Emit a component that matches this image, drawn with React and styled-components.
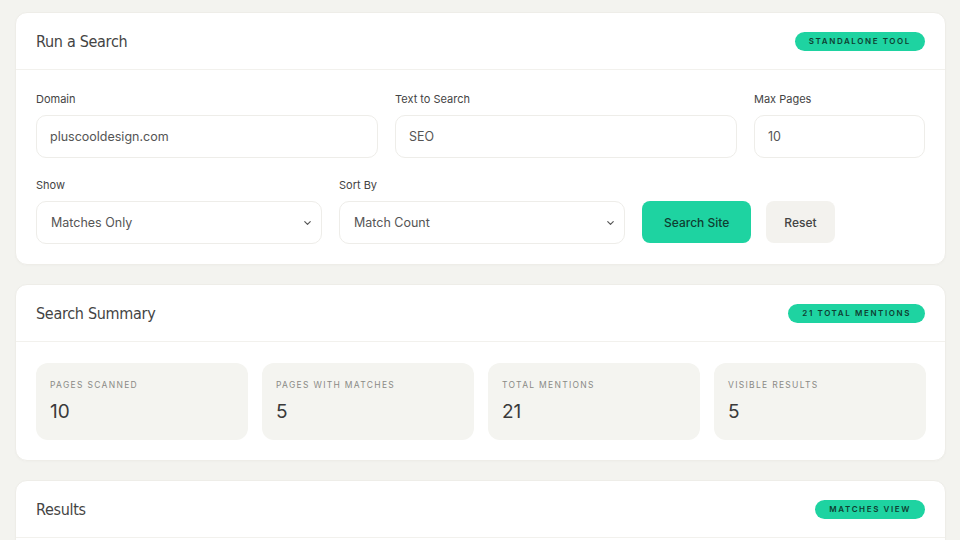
import styled, { createGlobalStyle } from 'styled-components';
import { ChevronDown } from 'lucide-react';

const GlobalStyle = createGlobalStyle`
  html, body {
    margin: 0;
    padding: 0;
    background: #f3f3ef;
    font-family: Inter, "Noto Sans", sans-serif;
    color: #3a3a3a;
  }
`;

// Layout
const Page = styled.div`
  display: flex;
  flex-direction: column;
  gap: 19px;
  padding: 12px 14px 12px 15px;
`;

const Card = styled.section`
  background: #ffffff;
  border: 1px solid #eeede8;
  border-radius: 12px;
  box-shadow: 0 1px 3px rgba(0, 0, 0, 0.02);
`;

const CardHeader = styled.header`
  height: 56px;
  padding: 0 20px;
  display: flex;
  align-items: center;
  justify-content: space-between;
  border-bottom: 1px solid #f2f1ed;
`;

const Title = styled.h2`
  margin: 0;
  font-family: "DejaVu Sans", sans-serif;
  font-stretch: condensed;
  font-weight: 400;
  font-size: 16px;
  color: #444;
  letter-spacing: -0.3px;
`;

const Badge = styled.span`
  background: #1ed3a1;
  color: #0f3e31;
  border-radius: 999px;
  height: 19px;
  padding: 0 14px;
  display: inline-flex;
  align-items: center;
  font-size: 8px;
  font-weight: 600;
  letter-spacing: 1.6px;
  text-transform: uppercase;
`;

const CardBody = styled.div`
  padding: ${(p) => p.$pad || '22px 20px 20px'};
`;

// Form
const FormRow = styled.div`
  display: grid;
  grid-template-columns: ${(p) => p.$cols};
  gap: 17px;
  align-items: end;
  & + & {
    margin-top: 20px;
  }
`;

const Field = styled.label`
  display: flex;
  flex-direction: column;
  gap: 9px;
  min-width: 0;
`;

const Label = styled.span`
  font-size: 11px;
  color: #444;
  line-height: 14px;
`;

const Input = styled.input`
  box-sizing: border-box;
  width: 100%;
  min-width: 0;
  height: 43px;
  border: 1px solid #eeede9;
  border-radius: 10px;
  padding: 0 13px;
  font-family: inherit;
  font-size: 12.5px;
  color: #555;
  background: #fff;
  outline: none;
`;

const SelectWrap = styled.div`
  position: relative;
  display: flex;

  svg {
    position: absolute;
    right: 9px;
    top: 50%;
    transform: translateY(-50%);
    color: #555;
    pointer-events: none;
  }
`;

const Select = styled.select`
  appearance: none;
  box-sizing: border-box;
  width: 100%;
  height: 43px;
  border: 1px solid #eeede9;
  border-radius: 10px;
  padding: 0 14px;
  font-family: inherit;
  font-size: 12.5px;
  color: #555;
  background: #fff;
  outline: none;
`;

const Button = styled.button`
  height: 42px;
  border: none;
  border-radius: 8px;
  padding: 0 ${(p) => (p.$primary ? '22px' : '18px')};
  font-family: inherit;
  font-size: 12px;
  font-weight: 500;
  background: ${(p) => (p.$primary ? '#1ed3a1' : '#f3f2ee')};
  color: ${(p) => (p.$primary ? '#0f3e31' : '#444')};
  cursor: pointer;
`;

const Actions = styled.div`
  display: flex;
  gap: 15px;
  margin-bottom: 1px;
`;

// Summary
const StatGrid = styled.div`
  display: grid;
  grid-template-columns: repeat(4, minmax(0, 1fr));
  gap: 14px;
`;

const Stat = styled.div`
  background: #f4f4f0;
  border-radius: 12px;
  height: 77px;
  box-sizing: border-box;
  padding: 16px 14px;
  display: flex;
  flex-direction: column;
  gap: 10px;
`;

const StatLabel = styled.span`
  font-size: 8.5px;
  letter-spacing: 1.3px;
  text-transform: uppercase;
  color: #8a8a86;
  line-height: 12px;
`;

const StatValue = styled.span`
  font-size: 19px;
  font-weight: 400;
  color: #3a3a3a;
  line-height: 22px;
`;

const ResultsBody = styled.div`
  min-height: 200px;
`;

const stats = [
  { label: 'Pages Scanned', value: 10 },
  { label: 'Pages With Matches', value: 5 },
  { label: 'Total Mentions', value: 21 },
  { label: 'Visible Results', value: 5 },
];

export default function App() {
  return (
    <>
      <GlobalStyle />
      <Page>
        <Card>
          <CardHeader>
            <Title>Run a Search</Title>
            <Badge>Standalone Tool</Badge>
          </CardHeader>
          <CardBody>
            <FormRow $cols="minmax(0, 2fr) minmax(0, 2fr) minmax(0, 1fr)">
              <Field>
                <Label>Domain</Label>
                <Input defaultValue="pluscooldesign.com" />
              </Field>
              <Field>
                <Label>Text to Search</Label>
                <Input defaultValue="SEO" />
              </Field>
              <Field>
                <Label>Max Pages</Label>
                <Input defaultValue="10" />
              </Field>
            </FormRow>
            <FormRow $cols="286px 286px auto">
              <Field>
                <Label>Show</Label>
                <SelectWrap>
                  <Select defaultValue="matches">
                    <option value="matches">Matches Only</option>
                    <option value="all">All Pages</option>
                  </Select>
                  <ChevronDown size={11} strokeWidth={2.5} />
                </SelectWrap>
              </Field>
              <Field>
                <Label>Sort By</Label>
                <SelectWrap>
                  <Select defaultValue="count">
                    <option value="count">Match Count</option>
                    <option value="url">URL</option>
                  </Select>
                  <ChevronDown size={11} strokeWidth={2.5} />
                </SelectWrap>
              </Field>
              <Actions>
                <Button $primary>Search Site</Button>
                <Button>Reset</Button>
              </Actions>
            </FormRow>
          </CardBody>
        </Card>

        <Card>
          <CardHeader>
            <Title>Search Summary</Title>
            <Badge>21 Total Mentions</Badge>
          </CardHeader>
          <CardBody $pad="21px 19px 20px 20px">
            <StatGrid>
              {stats.map((s) => (
                <Stat key={s.label}>
                  <StatLabel>{s.label}</StatLabel>
                  <StatValue>{s.value}</StatValue>
                </Stat>
              ))}
            </StatGrid>
          </CardBody>
        </Card>

        <Card>
          <CardHeader>
            <Title>Results</Title>
            <Badge>Matches View</Badge>
          </CardHeader>
          <ResultsBody />
        </Card>
      </Page>
    </>
  );
}
